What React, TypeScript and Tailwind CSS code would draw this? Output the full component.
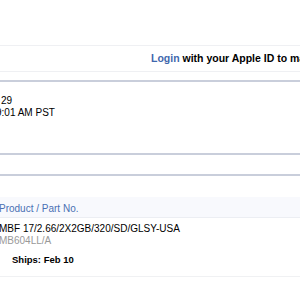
export default function App() {
  return (
    <div
      className="w-[300px] h-[300px] overflow-hidden bg-white text-black"
      style={{ fontFamily: '"Liberation Sans", Arial, sans-serif' }}
    >
      <div className="h-[45px]" />

      {/* Login bar */}
      <div className="h-[27px] border-y border-[#eff0f3] flex items-center">
        <div className="ml-[151px] whitespace-nowrap text-[10.5px] font-bold">
          <span className="text-[#3f67ad]">Login</span> with your Apple ID to manage your orders
        </div>
      </div>

      <div className="h-[8px]" />
      <div className="h-[2px] bg-[#c9cedb]" />

      {/* Order info */}
      <div className="pt-[13px] text-[10px] leading-[12px] whitespace-nowrap">
        <div className="ml-[1px]">29</div>
        <div className="-ml-[4px]">9:01 AM PST</div>
      </div>

      <div className="h-[34px]" />
      <div className="h-[2px] bg-[#c9cedb]" />
      <div className="h-[19px]" />
      <div className="h-[2px] bg-[#c9cedb]" />

      <div className="h-[21px]" />

      {/* Items header */}
      <div className="h-[21px] pt-[3px] bg-[#f8f9fd] border-b border-[#eceef3] flex items-center">
        <span className="-ml-[1px] text-[10px] text-[#4a70b4] whitespace-nowrap">
          Product / Part No.
        </span>
      </div>

      {/* Item row */}
      <div className="pt-[5px] pb-[10px] border-b border-[#f0f1f3] text-[10px] leading-[12px] whitespace-nowrap">
        <div className="-ml-[1px]">MBF 17/2.66/2X2GB/320/SD/GLSY-USA</div>
        <div className="-ml-[1px] text-[#999999]">MB604LL/A</div>
        <div className="mt-[7px] ml-[12px] text-[9.5px] font-bold">Ships: Feb 10</div>
      </div>
    </div>
  );
}
